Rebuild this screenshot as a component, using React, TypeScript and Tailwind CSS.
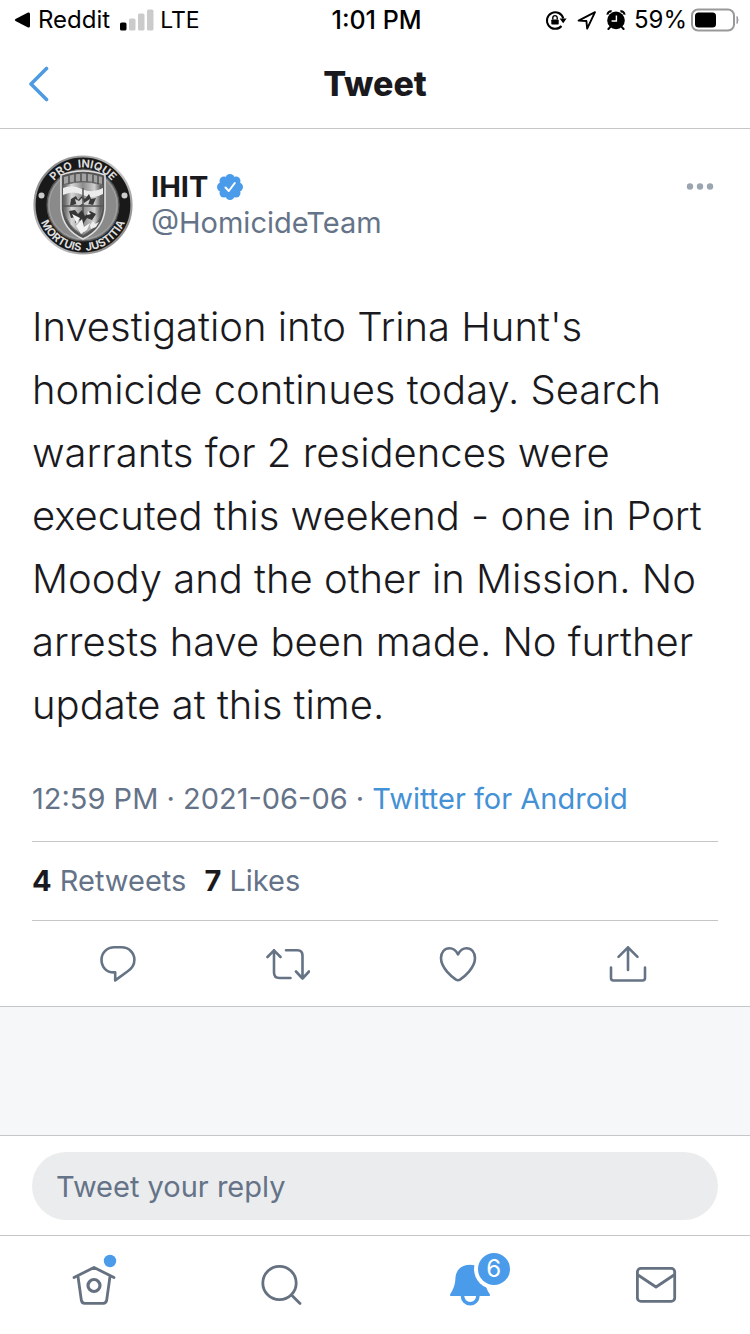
import { type ReactNode } from 'react'

function RotationLock() {
  return (
    <svg className="w-[22px] h-[22px] shrink-0" viewBox="0 0 22 22" fill="none">
      <path d="M16.5 17A8.3 8.3 0 1 1 18.3 9.5" stroke="black" strokeWidth="2" />
      <path d="M14.6 9.6h7l-3.4 4.6z" fill="black" />
      <rect x="6.3" y="10.4" width="7.4" height="5.2" rx="0.8" fill="black" />
      <path d="M7.8 10.6V8.8a2.2 2.2 0 0 1 4.4 0v1.8" stroke="black" strokeWidth="1.4" />
    </svg>
  )
}

function LocationArrow() {
  return (
    <svg className="w-5 h-5 shrink-0" viewBox="0 0 20 20" fill="none">
      <path d="M1.6 10.6 18 2.2 10.2 18.6 9.4 11z" stroke="black" strokeWidth="1.9" strokeLinejoin="round" />
    </svg>
  )
}

function AlarmClock() {
  return (
    <svg className="w-5 h-5 shrink-0" viewBox="0 0 20 20" fill="none">
      <circle cx="10" cy="10.4" r="8.8" fill="black" />
      <path d="M1.6 4.6a3.2 3.2 0 0 1 4-3.2M18.4 4.6a3.2 3.2 0 0 0-4-3.2" stroke="black" strokeWidth="2.2" />
      <path d="M4.6 16.6 2.4 19M15.4 16.6l2.2 2.4" stroke="black" strokeWidth="2" strokeLinecap="round" />
      <path d="M10.4 5.4v5.6H5.6" stroke="white" strokeWidth="1.4" />
    </svg>
  )
}

function StatusBar() {
  return (
    <div className="grid grid-cols-[1fr_auto_1fr] items-center h-10 pl-[14px] pr-[11px] text-2xl leading-7 text-black">
      <div className="flex items-center">
        <svg className="w-4 h-4" viewBox="0 0 16 16">
          <path d="M1.5 7Q0 8 1.5 9L14 15.4q2 .6 2-1.4V2q0-2-2-1.4z" fill="black" />
        </svg>
        <a href="#reddit" className="ml-2">Reddit</a>
        <svg className="w-[34px] h-[22px] ml-[10px]" viewBox="0 0 34 22">
          <rect x="0" y="13.5" width="6.5" height="8" rx="1.6" fill="black" />
          <rect x="9" y="9.5" width="6.5" height="12" rx="1.6" fill="#cbcbcb" />
          <rect x="18" y="4.5" width="6.5" height="17" rx="1.6" fill="#cbcbcb" />
          <rect x="27" y="0.5" width="6.5" height="21" rx="1.6" fill="#cbcbcb" />
        </svg>
        <span className="ml-[6px] text-[23px]">LTE</span>
      </div>
      <span className="font-medium text-[25px]">1:01 PM</span>
      <div className="flex items-center justify-end">
        <RotationLock />
        <div className="ml-[10px]">
          <LocationArrow />
        </div>
        <div className="ml-[9px]">
          <AlarmClock />
        </div>
        <span className="ml-2">59%</span>
        <svg className="w-12 h-6 ml-1 shrink-0" viewBox="0 0 48 24">
          <rect x="1" y="1.5" width="42" height="21" rx="6" fill="none" stroke="#999" strokeWidth="2" />
          <rect x="4" y="4.5" width="21" height="15" rx="3.5" fill="black" />
          <path d="M46 8.5q2 3.5 0 7z" fill="#999" stroke="#999" />
        </svg>
      </div>
    </div>
  )
}

function Avatar() {
  return (
    <svg className="w-[100px] h-[100px] ml-px shrink-0" viewBox="0 0 100 100" role="img" aria-label="IHIT crest">
      <defs>
        <linearGradient id="rim" x1="0" y1="0" x2="1" y2="1">
          <stop offset="0" stopColor="#777" />
          <stop offset="0.5" stopColor="#c8c8c8" />
          <stop offset="1" stopColor="#777" />
        </linearGradient>
        <linearGradient id="steel" x1="0" y1="0" x2="1" y2="0">
          <stop offset="0" stopColor="#5c5c5c" />
          <stop offset="0.2" stopColor="#d8d8d8" />
          <stop offset="0.5" stopColor="#8c8c8c" />
          <stop offset="0.8" stopColor="#cfcfcf" />
          <stop offset="1" stopColor="#4a4a4a" />
        </linearGradient>
        <path id="arcTop" d="M12.500 50a37.500 37.500 0 0 1 75 0" />
        <path id="arcBottom" d="M8.300 34a45 45 0 1 0 83.400 0" />
      </defs>
      <circle cx="50" cy="50" r="48.500" fill="#191919" stroke="url(#rim)" strokeWidth="2.200" />
      <circle cx="50" cy="50" r="36" fill="#8a8a8a" stroke="#555" strokeWidth="1.200" />
      <circle cx="50" cy="50" r="34" fill="none" stroke="#aaa" strokeWidth="0.800" />
      <g fill="#dedede" fontSize="11" fontWeight="700" textAnchor="middle">
        <text>
          <textPath href="#arcTop" startOffset="50%">PRO&#160; INIQUE</textPath>
        </text>
        <text>
          <textPath href="#arcBottom" startOffset="50%">MORTUIS&#160; JUSTITIA</textPath>
        </text>
      </g>
      <circle cx="8.500" cy="40.500" r="3" fill="#ccc" />
      <circle cx="91.500" cy="40.500" r="3" fill="#ccc" />
      <path d="M28 20q22-8 44 0v34Q70 75 50 84 30 75 28 54z" fill="#555" stroke="#e0e0e0" strokeWidth="1.600" />
      <path d="M31 30q19-6 38 0v24Q66 72 50 80 34 72 31 54z" fill="url(#steel)" stroke="#777" />
      <path d="M31 22q19-7 38 0v7q-19-6-38 0z" fill="#a2a2a2" />
      <path d="M36 20.500v8M42 19v8M48 18.500v8M54 18.500v8M60 19.500v8M65 21v8" stroke="#444" strokeWidth="1.300" />
      <path d="M30 33q9-4 19 1t21-1v6q-10 6-20 1t-20 0z" fill="#ececec" />
      <path d="M38 44l5-3 2 4 4-4 3 3 4-5 2 5 5-1-3 7-8-2-4 4-5-3-6 2z" fill="#3a3a3a" />
      <path d="M42 44l4 2 3-3 2 5 6-4-2 6-6-1-5 3z" fill="#cfcfcf" />
      <path d="M30 51h40M50 33v45" stroke="#555" strokeWidth="1.500" />
      <path d="M36 56l6-1 3 4 4-4 3 6 5-5 6 3-4 6-5-2-4 6-3-4-5 3 1-6-5 1z" fill="#353535" />
      <path d="M39 59l8 4-3 6zM43 71l6-7 2 8 6-4-3 7-6 4zM55 56l3 3-4 1z" fill="#f2f2f2" />
      <path d="M57 70l3-4 2 3 4-2-3 5-5 2z" fill="#eee" />
    </svg>
  )
}

function ActionIcon({ label, children }: { label: string; children: ReactNode }) {
  return (
    <button type="button" aria-label={label} className="flex justify-center">
      <svg
        className="w-11 h-11"
        viewBox="0 0 44 44"
        fill="none"
        stroke="#657385"
        strokeWidth="2.6"
        strokeLinecap="round"
        strokeLinejoin="round"
      >
        {children}
      </svg>
    </button>
  )
}

function NavItem({ label, href, badge, children }: { label: string; href: string; badge?: string; children: ReactNode }) {
  return (
    <a href={href} aria-label={label} className="flex justify-center">
      <span className="relative">
        <svg
          className="w-12 h-12 overflow-visible"
          viewBox="0 0 48 48"
          fill="none"
          stroke="#657180"
          strokeWidth="2.8"
          strokeLinecap="round"
          strokeLinejoin="round"
        >
          {children}
        </svg>
        {badge && (
          <span className="absolute left-[33px] -top-2 w-8 h-8 rounded-full bg-[#4a9cea] text-white text-2xl leading-8 text-center">
            {badge}
          </span>
        )}
      </span>
    </a>
  )
}

export default function App() {
  return (
    <div className="flex flex-col min-h-screen bg-white text-[#1a1a1e] font-['Inter','Liberation_Sans',sans-serif]">
      <StatusBar />

      <header className="grid grid-cols-[1fr_auto_1fr] items-center h-[89px] px-7 border-b border-[#c4c6c8]">
        <button type="button" aria-label="Back" className="justify-self-start">
          <svg className="w-[22px] h-9" viewBox="0 0 22 36" fill="none">
            <path d="M18.500 2.500 3 18l15.500 15.500" stroke="#4f9be3" strokeWidth="3.6" strokeLinecap="round" strokeLinejoin="round" />
          </svg>
        </button>
        <h1 className="text-[34px] leading-10 font-extrabold">Tweet</h1>
      </header>

      <main className="flex flex-col flex-1">
        <article className="px-8 pt-[26px]">
          <div className="flex items-start">
            <Avatar />
            <div className="flex-1 pt-3 pl-[18px]">
              <div className="flex items-center h-10">
                <span className="text-[29px] font-bold">IHIT</span>
                <svg className="w-7 h-7 ml-2" viewBox="0 0 28 28" aria-label="Verified">
                  <g fill="#4a9cea">
                    <circle cx="14" cy="14" r="10.500" />
                    <circle cx="14" cy="5.500" r="4.500" />
                    <circle cx="20" cy="8" r="4.500" />
                    <circle cx="22.500" cy="14" r="4.500" />
                    <circle cx="20" cy="20" r="4.500" />
                    <circle cx="14" cy="22.500" r="4.500" />
                    <circle cx="8" cy="20" r="4.500" />
                    <circle cx="5.500" cy="14" r="4.500" />
                    <circle cx="8" cy="8" r="4.500" />
                  </g>
                  <path d="M9.500 14.500l3.300 3.500 6-8" fill="none" stroke="white" strokeWidth="2" strokeLinecap="round" strokeLinejoin="round" />
                </svg>
              </div>
              <p className="text-[29px] leading-8 text-[#657388]">@HomicideTeam</p>
            </div>
            <button type="button" aria-label="More" className="mt-6 mr-1">
              <svg className="w-7 h-4" viewBox="0 0 28 16" fill="#9aa5b1">
                <circle cx="4" cy="7.500" r="3.200" />
                <circle cx="14" cy="7.500" r="3.200" />
                <circle cx="24" cy="7.500" r="3.200" />
              </svg>
            </button>
          </div>

          <p className="mt-10 text-[40px] leading-[63px] font-light">
            Investigation into Trina Hunt's homicide continues today. Search warrants for 2 residences were executed this
            weekend - one in Port Moody and the other in Mission. No arrests have been made. No further update at this
            time.
          </p>

          <p className="pt-[43px] pb-[22px] text-[29px] leading-10 text-[#657388] border-b border-[#c4c6c8]">
            12:59 PM · 2021-06-06 · <a href="#source" className="text-[#4591d6]">Twitter for Android</a>
          </p>

          <div className="flex items-center gap-[18px] h-[79px] text-[29px] text-[#657388] border-b border-[#c4c6c8]">
            <a href="#retweets"><b className="text-[#1a1a1e]">4</b> Retweets</a>
            <a href="#likes"><b className="text-[#1a1a1e]">7</b> Likes</a>
          </div>

          <div className="grid grid-cols-4 pl-px pr-[5px] pt-[22px] pb-[19px]">
            <ActionIcon label="Reply">
              <path d="M18.500 4.300h7C33 4.300 38.400 10 38.400 16.800c0 5-2.800 9-7 11.700L19.200 37.400V29.400h-1.500C10.500 29.400 5.500 24 5.500 16.800 5.500 9.800 11 4.300 18.500 4.300z" />
            </ActionIcon>
            <ActionIcon label="Retweet">
              <path d="M1.500 14 8 7.300l6.500 6.700M8 7.300v22.200q0 5.500 5.500 5.500h11M20 7.300h11.500q5 0 5 5.500v22.700M30 28.500l6.500 7 6.500-7" />
            </ActionIcon>
            <ActionIcon label="Like">
              <path d="M22 11.500C20 7.500 17 5.300 13.500 5.300 8.500 5.300 5 9.300 5 15c0 10 11 19 15 21.600q2 1.200 4 0C28 34 39 25 39 15c0-5.700-3.500-9.700-8.500-9.700C27 5.300 24 7.500 22 11.500z" />
            </ActionIcon>
            <ActionIcon label="Share">
              <path d="M22 4.300v22.700M12.500 13.800 22 4.300l9.500 9.500M5 24.500v10.500q0 2.500 2.500 2.500h29q2.500 0 2.500-2.500V24.500" />
            </ActionIcon>
          </div>
        </article>

        <div className="flex-1 bg-[#f6f7f9] border-y border-[#c4c6c8]" />

        <form className="px-8 pt-4 pb-[15px] border-b border-[#c4c6c8]">
          <input
            type="text"
            aria-label="Tweet your reply"
            placeholder="Tweet your reply"
            className="block w-full h-[68px] px-6 rounded-full bg-[#ebeced] text-[29px] placeholder:text-[#657388] outline-none"
          />
        </form>
      </main>

      <nav className="grid grid-cols-4 pt-[25px] pb-[25px]">
        <NavItem label="Home" href="#home">
          <path d="M4 16.500 24 6.500l20 10M8 15.500l3.300 23.500q.5 3.300 3.500 3.300h18.400q3 0 3.500-3.300L40 15.500" />
          <circle cx="24" cy="24.500" r="6" strokeWidth="3.200" />
          <circle cx="40" cy="0" r="6.200" fill="#4a9cea" stroke="none" />
        </NavItem>
        <NavItem label="Search" href="#search">
          <circle cx="22.500" cy="22" r="16.700" />
          <path d="M34.500 34l8.500 8.500" />
        </NavItem>
        <NavItem label="Notifications" href="#notifications" badge="6">
          <path d="M17.500 35a7.700 7.700 0 0 0 15.400 0" stroke="#4a9cea" strokeWidth="3.600" />
          <path d="M25 3.700C16.500 3.700 11 9 10.500 16.500 10 24 9 27 5.300 33q-1 2 .7 2h38q1.700 0 .7-2C41 27 40 24 39.500 16.500 39 9 33.500 3.700 25 3.700z" fill="#4a9cea" stroke="none" />
          <circle cx="49" cy="8" r="20" fill="white" stroke="none" />
        </NavItem>
        <NavItem label="Messages" href="#messages">
          <rect x="5.400" y="7.400" width="37.300" height="33" rx="3.500" />
          <path d="M6 14l18 12 18-12" />
        </NavItem>
      </nav>
    </div>
  )
}
